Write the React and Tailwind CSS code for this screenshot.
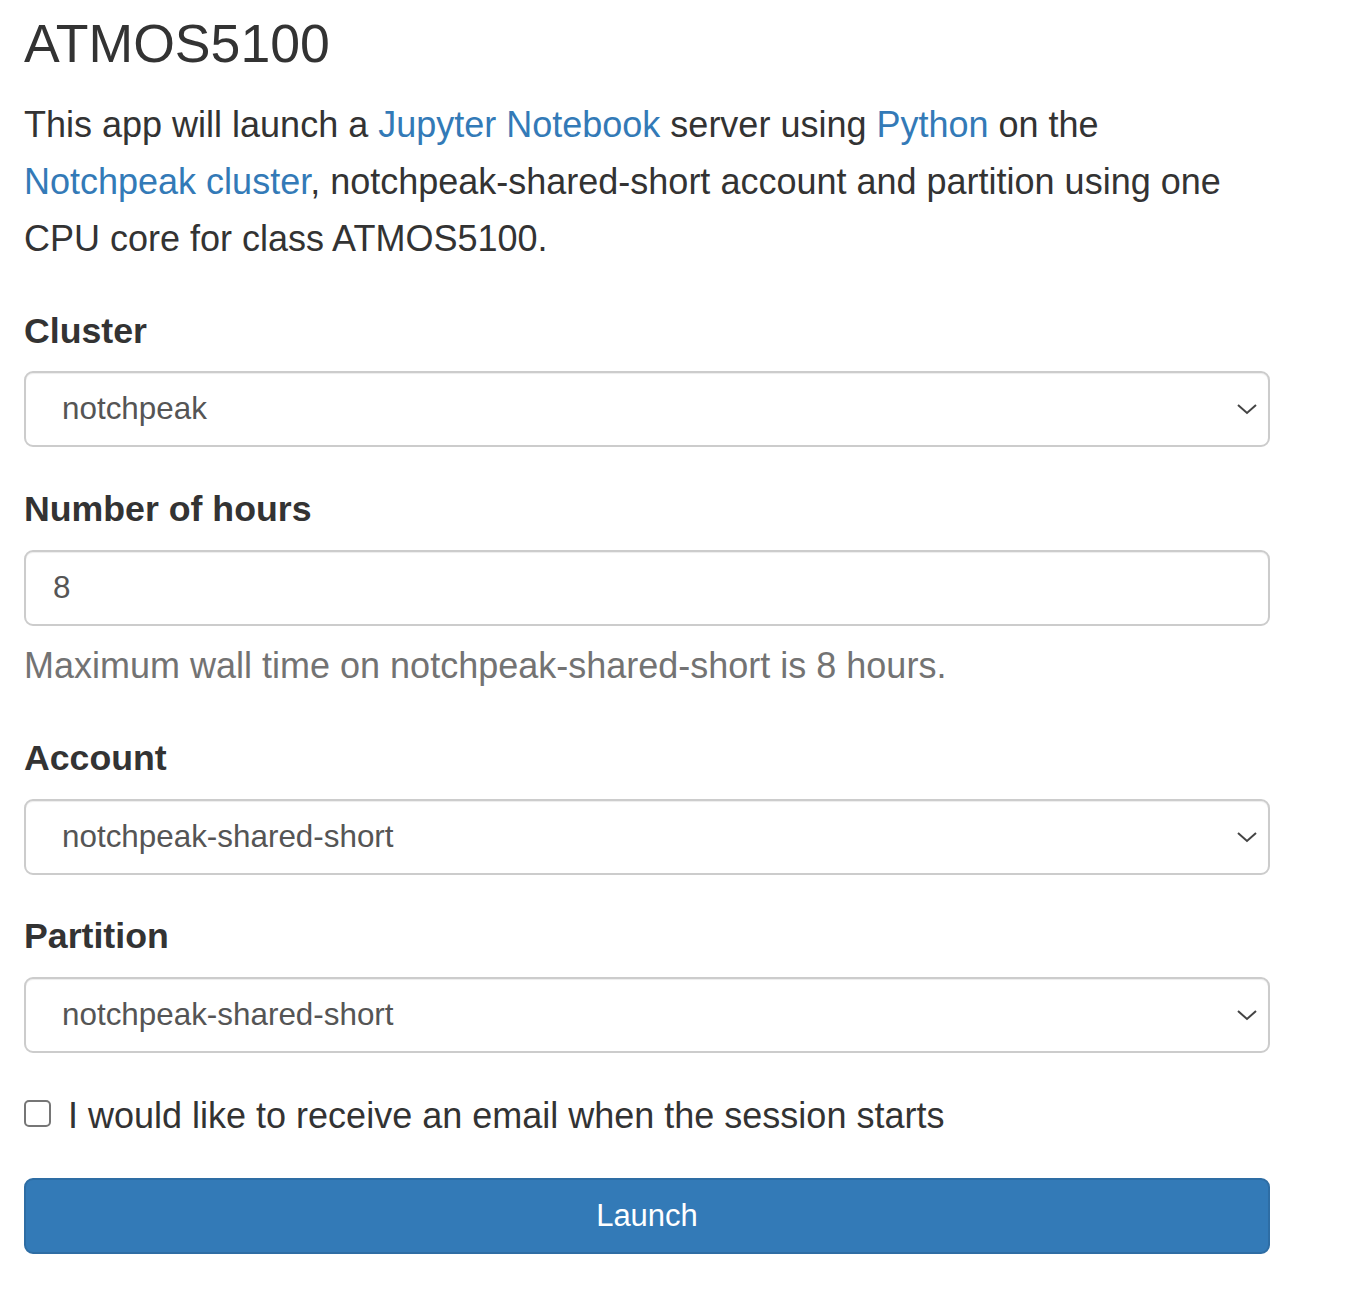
import React from "react";

function SelectBox({ value }) {
  return (
    <div className="flex h-[76px] w-full items-center justify-between rounded-[9px] border-2 border-[#cccccc] bg-white pl-[36px] pr-[9px] shadow-[inset_0_1px_1px_rgba(0,0,0,0.075)]">
      <span className="text-[31.4px] text-[#555555]">{value}</span>
      <svg width="22" height="14" viewBox="0 0 22 14" className="mr-[1px]">
        <path d="M2 3 L11 11 L20 3" fill="none" stroke="#444444" strokeWidth="2" />
      </svg>
    </div>
  );
}

export default function App() {
  return (
    <div className="min-h-[1289px] bg-white text-[#333333]" style={{ fontFamily: '"Liberation Sans", Arial, sans-serif' }}>
      <div className="w-[1246px] pl-[24px] box-content">
        <h1 className="pt-[13px] text-[53.6px] leading-[60px] font-normal text-[#333333]">ATMOS5100</h1>
        <p className="mt-[23px] text-[36px] leading-[57px]">
          This app will launch a <a className="text-[#337ab7]">Jupyter Notebook</a> server using{" "}
          <a className="text-[#337ab7]">Python</a> on the <a className="text-[#337ab7]">Notchpeak cluster</a>,
          notchpeak-shared-short account and partition using one CPU core for class ATMOS5100.
        </p>

        <div className="mt-[44px] text-[35.7px] leading-[40px] font-bold">Cluster</div>
        <div className="mt-[20px]">
          <SelectBox value="notchpeak" />
        </div>

        <div className="mt-[42px] text-[35.7px] leading-[40px] font-bold">Number of hours</div>
        <div className="mt-[21px] flex h-[76px] w-full items-center rounded-[9px] border-2 border-[#cccccc] bg-white pl-[27px] shadow-[inset_0_1px_1px_rgba(0,0,0,0.075)]">
          <span className="text-[31.4px] text-[#555555]">8</span>
        </div>
        <div className="mt-[20px] text-[36px] leading-[40px] text-[#737373]">
          Maximum wall time on notchpeak-shared-short is 8 hours.
        </div>

        <div className="mt-[52px] text-[35.7px] leading-[40px] font-bold">Account</div>
        <div className="mt-[21px]">
          <SelectBox value="notchpeak-shared-short" />
        </div>

        <div className="mt-[41px] text-[35.7px] leading-[40px] font-bold">Partition</div>
        <div className="mt-[21px]">
          <SelectBox value="notchpeak-shared-short" />
        </div>

        <div className="mt-[43px] flex items-start">
          <div className="mt-[4px] h-[27px] w-[27px] shrink-0 rounded-[5px] border-2 border-[#767676] bg-white" />
          <span className="ml-[17px] text-[36px] leading-[40px]">I would like to receive an email when the session starts</span>
        </div>

        <button className="mt-[42px] flex h-[76px] w-full items-center justify-center rounded-[9px] border-2 border-[#2e6da4] bg-[#337ab7] text-[31px] text-white">
          Launch
        </button>
      </div>
    </div>
  );
}
